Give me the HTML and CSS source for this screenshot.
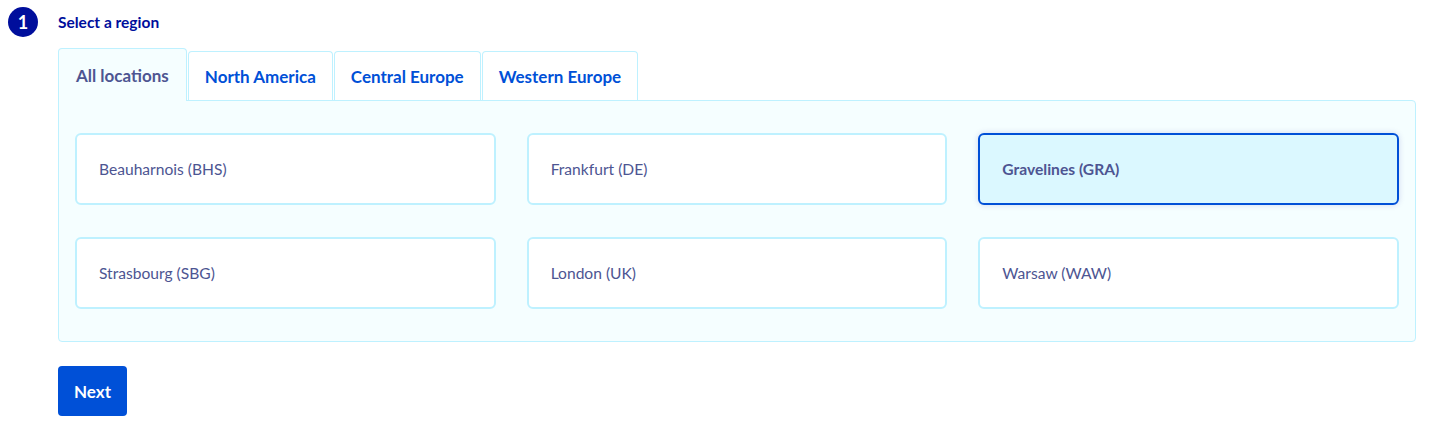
FILE: index.html
```html
<!DOCTYPE html>
<html lang="en">
<head>
<meta charset="utf-8">
<title>Select a region</title>
<link rel="stylesheet" href="styles.css">
</head>
<body>
<div class="step">
  <div class="step-head">
    <span class="badge">1</span>
    <h2 class="step-title">Select a region</h2>
  </div>
  <div class="step-body">
    <div class="tabs">
      <button class="tab tab-active">All locations</button>
      <button class="tab">North America</button>
      <button class="tab">Central Europe</button>
      <button class="tab">Western Europe</button>
    </div>
    <div class="panel">
      <div class="card">Beauharnois (BHS)</div>
      <div class="card">Frankfurt (DE)</div>
      <div class="card card-selected">Gravelines (GRA)</div>
      <div class="card">Strasbourg (SBG)</div>
      <div class="card">London (UK)</div>
      <div class="card">Warsaw (WAW)</div>
    </div>
    <button class="next">Next</button>
  </div>
</div>
</body>
</html>
```
FILE: styles.css
```css
* { box-sizing: border-box; }
body {
  margin: 0;
  font-family: "Lato", "Noto Sans", sans-serif;
  background: #ffffff;
}
.step { padding: 7px 23px 0 8px; }
.step-head {
  display: flex;
  align-items: center;
  gap: 20px;
  height: 30px;
}
.badge {
  width: 30px;
  height: 30px;
  border-radius: 50%;
  background: #000e9c;
  color: #fff;
  font-weight: 700;
  font-size: 18px;
  display: flex;
  align-items: center;
  justify-content: center;
}
.step-title {
  margin: 0;
  font-size: 15.5px;
  font-weight: 700;
  color: #000e9c;
}
.step-body { padding-left: 50px; padding-top: 11px; }
.tabs { display: flex; align-items: flex-end; }
.tab {
  font-family: inherit;
  font-size: 17px;
  font-weight: 700;
  color: #0050d7;
  background: #fff;
  border: 1px solid #bef1ff;
  border-bottom: none;
  border-radius: 4px 4px 0 0;
  height: 49px;
  padding: 0 16px;
  margin-right: 1px;
  cursor: pointer;
}
.tab-active {
  height: 53px;
  padding: 0 17px;
  background: #f5feff;
  color: #4d5592;
  margin-bottom: -1px;
  position: relative;
  z-index: 1;
}
.panel {
  background: #f5feff;
  border: 1px solid #bef1ff;
  border-radius: 0 4px 4px 4px;
  padding: 32px 16px 32px 16px;
  display: grid;
  grid-template-columns: repeat(3, 1fr);
  column-gap: 31px;
  row-gap: 32px;
}
.card {
  height: 72px;
  background: #fff;
  border: 2px solid #bef1ff;
  border-radius: 6px;
  display: flex;
  align-items: center;
  padding-left: 22px;
  font-size: 15.6px;
  color: #4d5592;
}
.card-selected {
  background: #dbf8ff;
  border-color: #0050d7;
  font-weight: 700;
  box-shadow: 0 0 6px rgba(0, 14, 156, 0.15);
}
.next {
  margin-top: 24px;
  height: 50px;
  padding: 0 16px;
  font-family: inherit;
  font-size: 17px;
  font-weight: 700;
  color: #fff;
  background: #0050d7;
  border: none;
  border-radius: 4px;
}
```
